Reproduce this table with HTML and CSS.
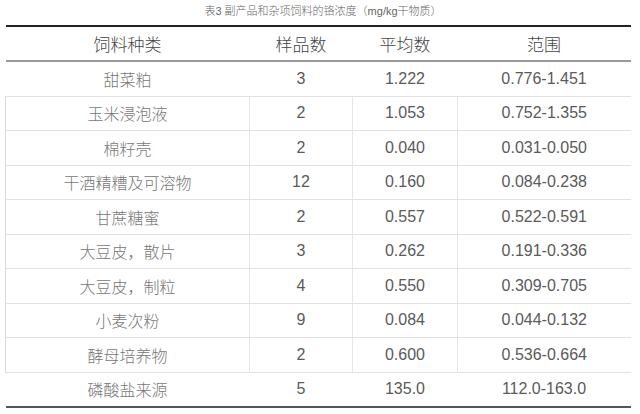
FILE: index.html
```html
<!DOCTYPE html>
<html lang="zh">
<head>
<meta charset="utf-8">
<link rel="stylesheet" href="styles.css">
</head>
<body>
<div class="caption">表3 副产品和杂项饲料的铬浓度（mg/kg干物质）</div>
<table class="data">
  <thead>
    <tr><th class="c1">饲料种类</th><th class="c2">样品数</th><th class="c3">平均数</th><th class="c4">范围</th></tr>
  </thead>
  <tbody>
    <tr class="plain"><td class="cn">甜菜粕</td><td>3</td><td>1.222</td><td>0.776-1.451</td></tr>
    <tr class="grid"><td class="cn">玉米浸泡液</td><td>2</td><td>1.053</td><td>0.752-1.355</td></tr>
    <tr class="grid"><td class="cn">棉籽壳</td><td>2</td><td>0.040</td><td>0.031-0.050</td></tr>
    <tr class="grid"><td class="cn">干酒精糟及可溶物</td><td>12</td><td>0.160</td><td>0.084-0.238</td></tr>
    <tr class="grid"><td class="cn">甘蔗糖蜜</td><td>2</td><td>0.557</td><td>0.522-0.591</td></tr>
    <tr class="grid"><td class="cn">大豆皮，散片</td><td>3</td><td>0.262</td><td>0.191-0.336</td></tr>
    <tr class="grid"><td class="cn">大豆皮，制粒</td><td>4</td><td>0.550</td><td>0.309-0.705</td></tr>
    <tr class="grid"><td class="cn">小麦次粉</td><td>9</td><td>0.084</td><td>0.044-0.132</td></tr>
    <tr class="grid"><td class="cn">酵母培养物</td><td>2</td><td>0.600</td><td>0.536-0.664</td></tr>
    <tr class="plain last"><td class="cn">磷酸盐来源</td><td>5</td><td>135.0</td><td>112.0-163.0</td></tr>
  </tbody>
</table>
</body>
</html>
```
FILE: styles.css
```css
html, body {
  margin: 0;
  padding: 0;
  background: #fff;
}
body {
  width: 640px;
  height: 414px;
  overflow: hidden;
  font-family: "Liberation Sans", "Noto Sans CJK SC", sans-serif;
}
.caption {
  height: 25px;
  box-sizing: border-box;
  padding: 5px 0 0 6px;
  text-align: center;
  font-size: 11px;
  line-height: 13px;
  font-weight: 300;
  color: #666;
  font-family: "Liberation Sans", "Noto Sans CJK SC", sans-serif;
}
.data {
  margin-left: 5px;
  width: 625px;
  border-collapse: collapse;
  table-layout: fixed;
  color: #5a5a5a;
}
.data th {
  height: 33px;
  padding: 0;
  font-weight: 300;
  font-size: 17px;
  color: #444;
  font-family: "Noto Sans CJK SC", sans-serif;
  border-top: 2px solid #222;
  border-bottom: 2px solid #999;
  text-align: center;
}
.c1 { width: 244px; }
.c2 { width: 103px; }
.c3 { width: 105px; }
.c4 { width: 173px; }
.data td {
  height: 33.5px;
  padding: 0;
  text-align: center;
  font-size: 16px;
  border-bottom: 1px solid #e2e2e2;
}
.data td.cn {
  font-family: "Noto Sans CJK SC", sans-serif;
  font-weight: 300;
  color: #777;
  font-size: 16px;
}
.grid td {
  border-left: 1px solid #e6e6e6;
}
.grid td:first-child {
  border-left: 1px solid #dcdcdc;
}
.last td {
  border-bottom: 2px solid #555;
}
```
